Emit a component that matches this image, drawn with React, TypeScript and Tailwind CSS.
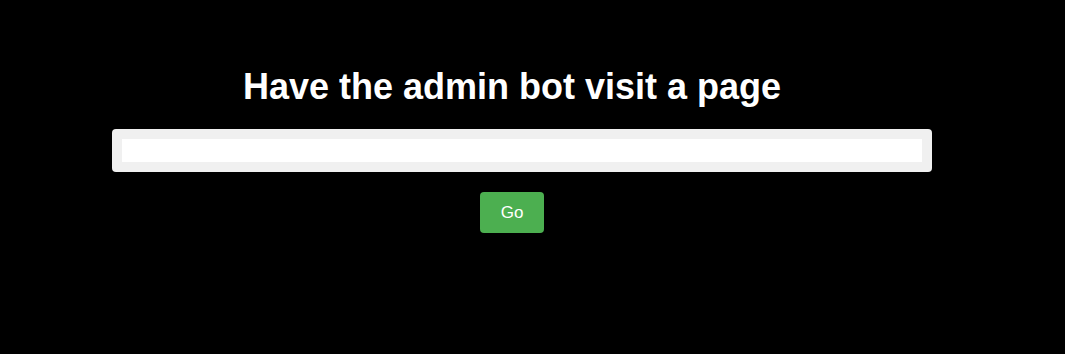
export default function App() {
  return (
    <div className="min-h-[354px] w-full bg-black font-['Liberation_Sans',Arial,sans-serif]">
      <div className="ml-[112px] flex w-[800px] flex-col items-center pt-[66px]">
        <h1 className="text-[36px] leading-[41px] font-bold text-white">Have the admin bot visit a page</h1>
        <form className="mt-[22px] w-[820px] self-start rounded-[4px] bg-[#f0f0f0] p-[10px]">
          <input type="text" className="block h-[23px] w-[800px] bg-white outline-none" />
        </form>
        <button
          type="button"
          className="mt-[20px] flex h-[41px] w-[64px] items-center justify-center rounded-[4px] bg-[#4caf50] text-[17px] text-white"
        >
          Go
        </button>
      </div>
    </div>
  );
}
